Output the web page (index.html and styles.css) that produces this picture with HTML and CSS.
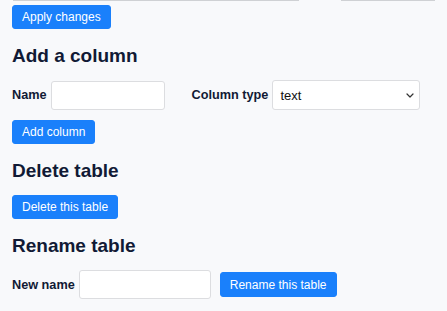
FILE: index.html
```html
<!DOCTYPE html>
<html lang="en">

<head>
    <meta charset="UTF-8">
    <meta name="viewport" content="width=device-width, initial-scale=1.0">
    <title>Edit table</title>
    <link rel="stylesheet" href="styles.css">
</head>

<body>
    <div class="previous-fields">
        <div class="field-edge wide"></div>
        <div class="field-edge narrow"></div>
    </div>

    <form class="section">
        <button type="submit" class="btn">Apply changes</button>
    </form>

    <form class="section">
        <h2>Add a column</h2>
        <div class="form-row">
            <label for="col-name">Name</label>
            <input type="text" id="col-name" class="text-input name-input">
            <label for="col-type" class="type-label">Column type</label>
            <div class="select-wrap">
                <select id="col-type" class="select-input">
                    <option>text</option>
                    <option>integer</option>
                    <option>float</option>
                    <option>blob</option>
                </select>
                <svg class="chevron" width="8" height="5" viewBox="0 0 8 5">
                    <path d="M1 1l3 3 3-3" fill="none" stroke="#333" stroke-width="1.2" stroke-linecap="round" stroke-linejoin="round"/>
                </svg>
            </div>
        </div>
        <button type="submit" class="btn">Add column</button>
    </form>

    <form class="section">
        <h2>Delete table</h2>
        <button type="submit" class="btn">Delete this table</button>
    </form>

    <form class="section">
        <h2>Rename table</h2>
        <div class="form-row">
            <label for="new-name">New name</label>
            <input type="text" id="new-name" class="text-input rename-input">
            <button type="submit" class="btn rename-btn">Rename this table</button>
        </div>
    </form>
</body>

</html>
```

FILE: styles.css
```css
* {
    margin: 0;
    padding: 0;
    box-sizing: border-box;
}

body {
    font-family: "Liberation Sans", Arial, sans-serif;
    font-size: 13px;
    color: #111a35;
    background-color: #f8f9fb;
    padding: 0 12px;
}

.previous-fields {
    display: flex;
    height: 1px;
    margin-left: 1px;
}

.field-edge {
    border-bottom: 1px solid #cfd1d4;
}

.field-edge.wide {
    width: 305px;
}

.field-edge.narrow {
    width: 100px;
    margin-left: 42px;
}

.section h2 {
    font-size: 19px;
    line-height: 23px;
    font-weight: bold;
    margin-top: 15px;
    margin-bottom: 13px;
}

.btn {
    display: inline-block;
    font-family: "Liberation Sans", Arial, sans-serif;
    font-size: 12px;
    line-height: 1;
    color: #fff;
    background-color: #1a80fb;
    border: 1px solid #1a80fb;
    border-radius: 3px;
    padding: 5px 9px;
    height: 24px;
    cursor: pointer;
}

.section:first-of-type {
    padding-top: 4px;
}

.form-row {
    display: flex;
    align-items: center;
    margin-bottom: 10px;
}

.form-row label {
    font-size: 12.7px;
    font-weight: bold;
    margin-right: 4px;
}

.text-input {
    height: 29px;
    background: #fff;
    border: 1px solid #dcdde0;
    border-radius: 3px;
    font-family: inherit;
    font-size: 13px;
    padding: 0 6px;
}

.name-input {
    width: 114px;
}

.type-label {
    margin-left: 27px;
}

.select-wrap {
    position: relative;
}

.select-input {
    appearance: none;
    -webkit-appearance: none;
    width: 148px;
    height: 30px;
    background: #fff;
    border: 1px solid #dcdde0;
    border-radius: 3px;
    font-family: inherit;
    font-size: 13px;
    color: #111;
    padding: 0 7px;
}

.chevron {
    position: absolute;
    right: 6px;
    top: 13px;
    pointer-events: none;
}

.rename-input {
    width: 132px;
}

.rename-btn {
    margin-left: 9px;
    height: 25px;
}
```
